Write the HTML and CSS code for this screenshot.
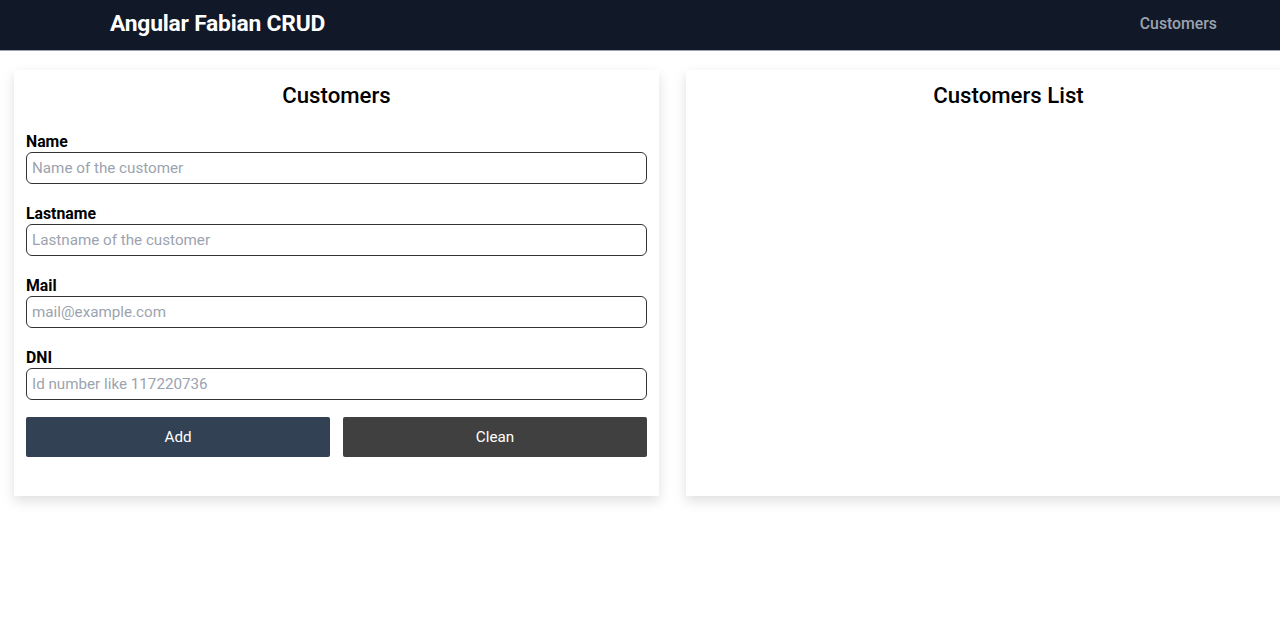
FILE: index.html
```html
<!DOCTYPE html>
<html lang="en">
<head>
<meta charset="utf-8">
<title>Angular Fabian CRUD</title>
<link rel="stylesheet" href="styles.css">
</head>
<body>
<header class="navbar">
  <div class="brand">Angular Fabian CRUD</div>
  <nav class="nav-links"><a class="nav-link" href="#">Customers</a></nav>
</header>
<main class="content">
  <section class="card">
    <h2 class="card-title">Customers</h2>
    <form class="form">
      <div class="field">
        <label class="label">Name</label>
        <input class="input" type="text" placeholder="Name of the customer">
      </div>
      <div class="field">
        <label class="label">Lastname</label>
        <input class="input" type="text" placeholder="Lastname of the customer">
      </div>
      <div class="field">
        <label class="label">Mail</label>
        <input class="input" type="text" placeholder="mail@example.com">
      </div>
      <div class="field">
        <label class="label">DNI</label>
        <input class="input" type="text" placeholder="Id number like 117220736">
      </div>
      <div class="actions">
        <button class="btn btn-add" type="button">Add</button>
        <button class="btn btn-clean" type="button">Clean</button>
      </div>
    </form>
  </section>
  <section class="card">
    <h2 class="card-title">Customers List</h2>
  </section>
</main>
</body>
</html>
```
FILE: styles.css
```css
* { box-sizing: border-box; }
html, body { margin: 0; padding: 0; }
body {
  font-family: Roboto, "Liberation Sans", sans-serif;
  background: #ffffff;
  color: #000;
}
.navbar {
  height: 51px;
  background: #111827;
  border-bottom: 1px solid #9aa3b3;
  display: flex;
  align-items: center;
  justify-content: space-between;
  padding: 0 63px 2px 110px;
}
.brand {
  color: #ffffff;
  font-size: 22.8px;
  font-weight: 700;
  letter-spacing: -0.2px;
  line-height: 28px;
}
.nav-link {
  color: #9ca3af;
  font-size: 15.8px;
  font-weight: 500;
  text-decoration: none;
  line-height: 20px;
  display: block;
  margin-top: -1px;
}
.content {
  display: flex;
  gap: 27px;
  padding: 19px 0 30px 14px;
  align-items: flex-start;
  overflow: hidden;
}
.card {
  flex: 0 0 645px;
  height: 426px;
  background: #fff;
  box-shadow: 0 5px 12px rgba(0, 0, 0, 0.13);
  padding: 12px 12px 39px 12px;
}
.card-title {
  margin: 0;
  text-align: center;
  font-size: 22.2px;
  font-weight: 500;
  line-height: 27px;
}
.form {
  margin-top: 23px;
  display: flex;
  flex-direction: column;
  gap: 20px;
}
.field {
  display: flex;
  flex-direction: column;
}
.label {
  font-size: 15.8px;
  font-weight: 700;
  line-height: 20px;
}
.input {
  height: 32px;
  width: 100%;
  border: 1px solid #333;
  border-radius: 6px;
  padding: 0 5px;
  font-family: Roboto, "Liberation Sans", sans-serif;
  font-size: 15.2px;
  color: #111;
  background: #fff;
}
.input::placeholder { color: #9ca3af; }
.actions {
  display: grid;
  grid-template-columns: 1fr 1fr;
  gap: 13px;
  margin-top: -3px;
}
.btn {
  height: 40px;
  border: none;
  border-radius: 2px;
  color: #fff;
  font-family: Roboto, "Liberation Sans", sans-serif;
  font-size: 15.2px;
}
.btn-add { background: #334155; }
.btn-clean { background: #404040; }
```
